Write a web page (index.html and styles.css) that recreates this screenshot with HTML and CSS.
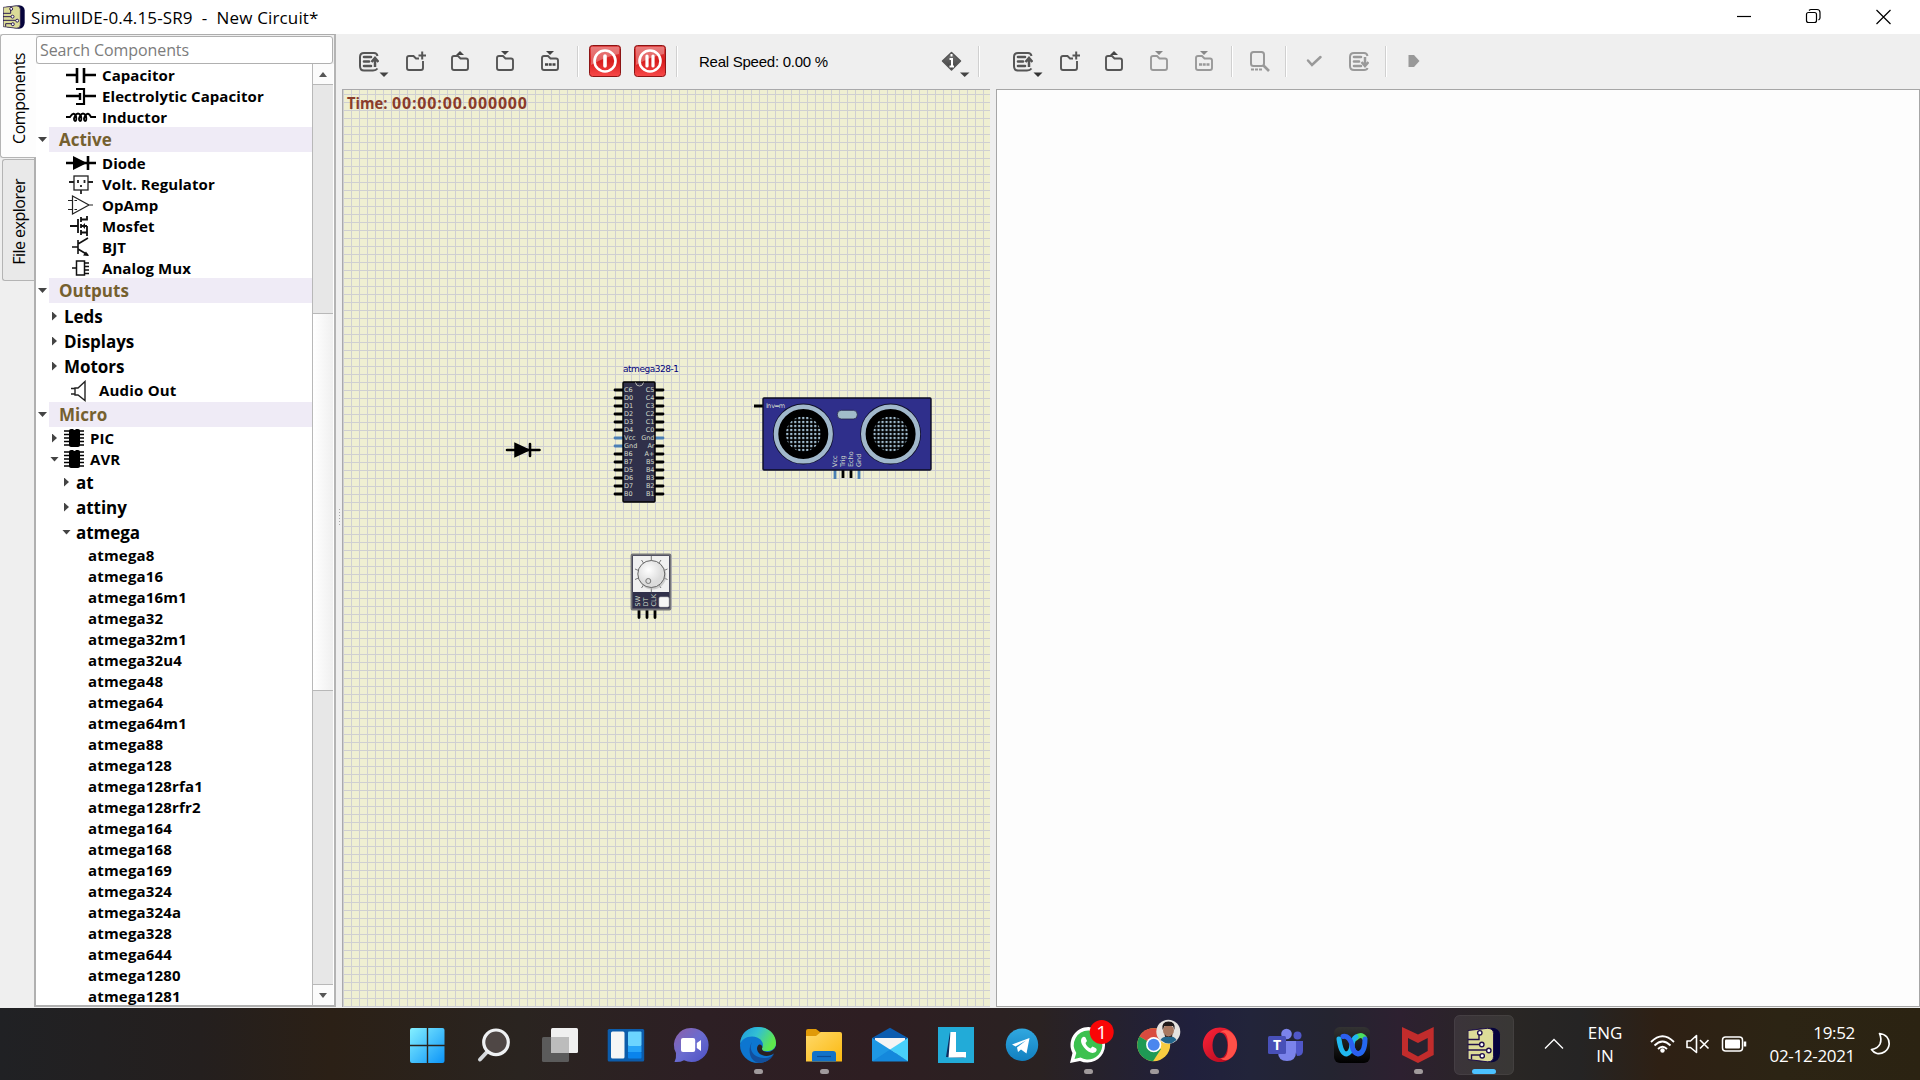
FILE: index.html
```html
<!DOCTYPE html>
<html lang="en">
<head>
<meta charset="utf-8">
<title>SimulIDE-0.4.15-SR9 - New Circuit*</title>
<link rel="stylesheet" href="styles.css">
</head>
<body>
<svg width="0" height="0" class="defs" aria-hidden="true">
  <defs>
    <linearGradient id="gDark" x1="0" y1="0" x2="0" y2="1"><stop offset="0" stop-color="#777"/><stop offset="1" stop-color="#3c3c3c"/></linearGradient>
    <linearGradient id="gRed" x1="0" y1="0" x2="0" y2="1"><stop offset="0" stop-color="#e04848"/><stop offset=".5" stop-color="#d81c1c"/><stop offset="1" stop-color="#f84a4a"/></linearGradient>
    <symbol id="doc-up" viewBox="0 0 20 20">
      <path d="M18.500 4Q18 1 15 1H5Q1 1 1 5V14Q1 18.500 5 18.500H14Q17 18.500 18.500 16.500" fill="none" stroke="currentColor" stroke-width="2"/>
      <path d="M5 5H12M5 9.500H10M5 14H12" stroke="currentColor" stroke-width="2.600" stroke-linecap="round"/>
      <path d="M16 15V7M12.500 10L16 6L19.500 10" fill="none" stroke="currentColor" stroke-width="2.500"/>
    </symbol>
    <symbol id="doc-down" viewBox="0 0 20 20">
      <path d="M18.500 4Q18 1 15 1H5Q1 1 1 5V14Q1 18 5 18H15Q18 18 18.500 16" fill="none" stroke="currentColor" stroke-width="2"/>
      <path d="M5 5H12M5 9.500H10M5 14H12" stroke="currentColor" stroke-width="2.600" stroke-linecap="round"/>
      <path d="M16 5V13M12.500 10L16 14L19.500 10" fill="none" stroke="currentColor" stroke-width="2.500"/>
    </symbol>
    <symbol id="folder" viewBox="0 0 18 16"><path d="M1 3Q1 1 3 1H7L9.500 3.500H15Q17 3.500 17 5.500V13Q17 15 15 15H3Q1 15 1 13Z" fill="none" stroke="currentColor" stroke-width="1.900"/></symbol>
    <symbol id="folder-new" viewBox="0 0 21 20">
      <path d="M10 7.500L7.500 5H3Q1 5 1 7V17Q1 19 3 19H15Q17 19 17 17V10M9.500 7.500H13" fill="none" stroke="currentColor" stroke-width="1.900"/>
      <path d="M12.500 4.500H20M16.200 .500V8.500" stroke="currentColor" stroke-width="2"/>
    </symbol>
    <symbol id="simul" viewBox="0 0 33 35">
      <path d="M5 2L24 0Q32 1 32.500 7V26Q32 34 24 35L6 33Z" fill="#06043c"/>
      <path d="M.500 3L20 .800Q26 1 26 6V29Q26 34.500 20 34.300L.500 32Z" fill="#dcdc98" stroke="#20104c" stroke-width="1"/>
      <path d="M0 12H11.500V5M0 17H14M0 22.500H21M4 32V27.500H14" fill="none" stroke="#20104c" stroke-width="1.400"/>
      <g fill="#fff" stroke="#20104c" stroke-width="1.400"><circle cx="12.300" cy="5.300" r="2.200"/><circle cx="14.300" cy="17" r="2.200"/><circle cx="21.300" cy="23" r="2.200"/><circle cx="14.700" cy="28.300" r="2.200"/></g>
    </symbol>
    <symbol id="dip" viewBox="0 0 20 18"><path d="M0 2H20M0 5.500H20M0 9H20M0 12.500H20M0 16H20" stroke="#000" stroke-width="1.500"/><rect x="5" y="0" width="11" height="18" rx="2"/><path d="M9 0Q10.500 2 12 0" fill="#fff"/></symbol>
  </defs>
</svg>

<div class="app">
  <header class="titlebar">
    <svg class="app-icon" width="22" height="24"><use href="#simul"/></svg>
    <h1 class="title">SimulIDE-0.4.15-SR9 &nbsp;- &nbsp;New Circuit*</h1>
    <svg class="win-controls" width="190" height="34" fill="none" stroke="#000" stroke-width="1.200">
      <path d="M7 16.500H21"/>
      <rect x="76.500" y="12.500" width="10" height="10" rx="2"/><path d="M79 10.500Q80 9.500 81 9.500H87Q90 9.500 90 12.500V18Q90 19 88.500 20"/>
      <path d="M146.500 10L160.500 24M160.500 10L146.500 24"/>
    </svg>
  </header>

  <main class="workspace">
    <nav class="tabs">
      <div class="tab tab-active"><span>Components</span></div>
      <div class="tab"><span>File explorer</span></div>
    </nav>

    <aside class="panel">
      <div class="search">Search Components</div>
      <div class="tree-wrap">
        <div class="tree">
          <div class="row part"><svg width="30" height="20"><path d="M0 10H11M18 10H30M11 3V18M18 3V18" stroke="#000" stroke-width="2.600"/></svg>Capacitor</div>
          <div class="row part"><svg width="30" height="20"><path d="M0 10H14M14 7V14M18 10H30" stroke="#000" stroke-width="2.400"/><path d="M10 3H18V18H10" fill="none" stroke="#000" stroke-width="2.200"/></svg>Electrolytic Capacitor</div>
          <div class="row part"><svg width="30" height="20"><path d="M0 10H4Q8 4 10 9Q11 14 9 14Q7 13 9 9Q12 4 15 9Q16 14 14 14Q12 13 14 9Q17 4 20 9Q21 14 19 14Q17 13 19 9Q22 4 25 10H30" fill="none" stroke="#000" stroke-width="1.800"/></svg>Inductor</div>
          <div class="row cat"><i class="arr down"></i><span>Active</span></div>
          <div class="row part"><svg width="30" height="20"><path d="M0 10H30M22 3V17" stroke="#000" stroke-width="2.600"/><path d="M7 3L21 10L7 17Z"/></svg>Diode</div>
          <div class="row part"><svg width="30" height="20" fill="none" stroke="#222" stroke-width="1.300"><rect x="8" y="2" width="14" height="14"/><path d="M3 8H8M22 8H27M15 16V20M12 6V9M18.500 6V9M15 11V13" stroke-width="1.800"/></svg>Volt. Regulator</div>
          <div class="row part"><svg width="30" height="20" fill="none" stroke="#222" stroke-width="1.200"><path d="M6.500 1V19L23 10ZM2 5.500H6.500M2 14.500H6.500M23 10H27M8.500 5.500H11M8.500 14.500H11"/></svg>OpAmp</div>
          <div class="row part"><svg width="30" height="20" fill="none" stroke="#111" stroke-width="1.800"><path d="M4 10H12M12 3V17M15 1V6M15 8V12M15 14V19M15 3.500H21V0M15 10H21M15 16.500H21M21 10V20"/><path d="M16 10L19 7V13Z" fill="#111" stroke="none"/></svg>Mosfet</div>
          <div class="row part"><svg width="30" height="20" fill="none" stroke="#111" stroke-width="1.600"><path d="M6 10H12M12 3V17M12 7L22 1M12 12L22 18"/><path d="M23 19L17 18.500L20 14.500Z" fill="#111" stroke="none"/></svg>BJT</div>
          <div class="row part"><svg width="30" height="20" fill="none" stroke="#111" stroke-width="1.500"><rect x="10.500" y="3" width="8" height="14"/><path d="M6 10H10M18 5H23M18 8.500H23M18 12H23M18 15.500H23"/></svg>Analog Mux</div>
          <div class="row cat"><i class="arr down"></i><span>Outputs</span></div>
          <div class="row group"><i class="arr right"></i>Leds</div>
          <div class="row group"><i class="arr right"></i>Displays</div>
          <div class="row group"><i class="arr right"></i>Motors</div>
          <div class="row audio"><svg width="30" height="22" fill="none" stroke="#222" stroke-width="1.400"><path d="M9 8H12L19 1.500V20.500L12 15H9ZM5 8.500H9M5 14H9"/></svg>Audio Out</div>
          <div class="row cat"><i class="arr down"></i><span>Micro</span></div>
          <div class="row micro"><i class="arr right"></i><svg width="20" height="18"><use href="#dip"/></svg>PIC</div>
          <div class="row micro"><i class="arr down"></i><svg width="20" height="18"><use href="#dip"/></svg>AVR</div>
          <div class="row group deep"><i class="arr right"></i>at</div>
          <div class="row group deep"><i class="arr right"></i>attiny</div>
          <div class="row group deep"><i class="arr down"></i>atmega</div>
          <div class="row leaf">atmega8</div>
          <div class="row leaf">atmega16</div>
          <div class="row leaf">atmega16m1</div>
          <div class="row leaf">atmega32</div>
          <div class="row leaf">atmega32m1</div>
          <div class="row leaf">atmega32u4</div>
          <div class="row leaf">atmega48</div>
          <div class="row leaf">atmega64</div>
          <div class="row leaf">atmega64m1</div>
          <div class="row leaf">atmega88</div>
          <div class="row leaf">atmega128</div>
          <div class="row leaf">atmega128rfa1</div>
          <div class="row leaf">atmega128rfr2</div>
          <div class="row leaf">atmega164</div>
          <div class="row leaf">atmega168</div>
          <div class="row leaf">atmega169</div>
          <div class="row leaf">atmega324</div>
          <div class="row leaf">atmega324a</div>
          <div class="row leaf">atmega328</div>
          <div class="row leaf">atmega644</div>
          <div class="row leaf">atmega1280</div>
          <div class="row leaf">atmega1281</div>
        </div>
        <div class="scrollbar">
          <div class="sb-btn"><svg width="8" height="5"><path d="M0 5L4 0L8 5Z" fill="#555"/></svg></div>
          <div class="sb-before"></div>
          <div class="sb-thumb"></div>
          <div class="sb-after"></div>
          <div class="sb-btn"><svg width="8" height="5"><path d="M0 0H8L4 5Z" fill="#555"/></svg></div>
        </div>
      </div>
    </aside>

    <div class="splitter"><i></i></div>

    <section class="circuit">
      <div class="toolbar">
        <svg class="tool first" width="50" height="55"><use href="#doc-up" x="16" y="18" width="20" height="20"/><path d="M36.500 38.500H45.500L41 43Z" fill="#444"/></svg>
        <svg class="tool" width="45" height="55"><use href="#folder-new" x="13" y="17" width="21" height="20"/></svg>
        <svg class="tool" width="45" height="55"><use href="#folder" x="13" y="21" width="18" height="16"/><path d="M18 21L22 17L26 21Z" fill="#444"/></svg>
        <svg class="tool" width="45" height="55"><use href="#folder" x="13" y="21" width="18" height="16"/><path d="M18 17H26L22 21Z" fill="#444"/></svg>
        <svg class="tool" width="45" height="55"><use href="#folder" x="13" y="21" width="18" height="16"/><path d="M18 17H26L22 21Z" fill="#444"/><path d="M17 30.500H20M20.700 30.500H23.700M24.500 30.500H27.500" stroke="#444" stroke-width="2.500"/></svg>
        <i class="sep"></i>
        <svg class="tool" width="45" height="55"><rect x="7.500" y="11.500" width="31" height="31" rx="3" fill="url(#gRed)" stroke="#8c1414"/><path d="M9 13H37V20Q25 22 9 31Z" fill="#fff" opacity=".3"/><circle cx="23" cy="27" r="10.500" fill="none" stroke="#fff" stroke-width="2.600"/><path d="M23 22V32" stroke="#fff" stroke-width="3.600" stroke-linecap="round"/></svg>
        <svg class="tool" width="45" height="55"><rect x="7.500" y="11.500" width="31" height="31" rx="3" fill="url(#gRed)" stroke="#8c1414"/><path d="M9 13H37V20Q25 22 9 31Z" fill="#fff" opacity=".3"/><circle cx="23" cy="27" r="10.500" fill="none" stroke="#fff" stroke-width="2.600"/><path d="M20 22V32M26 22V32" stroke="#fff" stroke-width="3.200" stroke-linecap="round"/></svg>
        <i class="sep"></i>
        <span class="speed">Real Speed: 0.00 %</span>
        <svg class="tool info" width="45" height="55"><path d="M16.500 18.500L25.500 27L16.500 36L7.500 27Z" fill="url(#gDark)" stroke="#555" stroke-width="1.500" stroke-linejoin="round"/><path d="M16.500 20V22.500M14.500 25H17V33M14.500 32.500H19" stroke="#fff" stroke-width="2" fill="none"/><path d="M25 38.500H34.500L29.700 43Z" fill="#444"/></svg>
        <i class="sep"></i>
      </div>
      <svg class="canvas" width="648" height="918" viewBox="342 89 648 918">
        <defs>
          <pattern id="grid" x="351" y="94" width="8" height="8" patternUnits="userSpaceOnUse"><path d="M0 0H8V1H1V8H0Z" fill="#cfcfd2"/></pattern>
          <pattern id="mesh" x="-1.100" y="-1.100" width="4" height="4" patternUnits="userSpaceOnUse"><rect width="2.200" height="2.200" fill="#a3bfd2"/></pattern>
          <radialGradient id="knob" cx=".4" cy=".35"><stop offset="0" stop-color="#fff"/><stop offset="1" stop-color="#dcdcdc"/></radialGradient>
        </defs>
        <rect x="342" y="89" width="648" height="918" fill="#efefd2"/>
        <rect x="342" y="89" width="648" height="918" fill="url(#grid)"/>
        <path d="M342 89H990V90H343V1007H342Z" fill="#a9a9ab"/>
        <text x="347" y="109" class="time" textLength="40.500" lengthAdjust="spacingAndGlyphs">Time:</text>
        <text x="392" y="109" class="time" textLength="135">00:00:00.000000</text>

        <g stroke="#000" stroke-width="2.600" stroke-linecap="round"><path d="M507 450H539.500M530 444V456"/><path d="M515 443.500V456.500L529 450Z" stroke-width="1.500"/></g>

        <text x="623" y="371.800" class="chip-name" textLength="56">atmega328-1</text>
        <g stroke="#000" stroke-width="2.800" stroke-linecap="round">
          <path d="M615 390H663M615 398H663M615 406H663M615 414H663M615 422H663M615 430H663M640 446H663M615 454H663M615 462H663M615 470H663M615 478H663M615 486H663M615 494H663"/>
          <path d="M615 438H663M615 446H630" stroke="#4a7fb5"/>
        </g>
        <rect x="623" y="382" width="32" height="120" rx="1" fill="#30304a" stroke="#000" stroke-width="1.400"/>
        <path d="M635.500 382.500Q636 386 639.500 386Q643 386 643.500 382.500" fill="none" stroke="#b8b8b0" stroke-width="1"/>
        <g class="pins">
          <text x="624" y="392.300">C6</text><text x="624" y="400.300">D0</text><text x="624" y="408.300">D1</text><text x="624" y="416.300">D2</text><text x="624" y="424.300">D3</text><text x="624" y="432.300">D4</text><text x="624" y="440.300">Vcc</text><text x="624" y="448.300">Gnd</text><text x="624" y="456.300">B6</text><text x="624" y="464.300">B7</text><text x="624" y="472.300">D5</text><text x="624" y="480.300">D6</text><text x="624" y="488.300">D7</text><text x="624" y="496.300">B0</text>
        </g>
        <g class="pins pins-r">
          <text x="654.500" y="392.300">C5</text><text x="654.500" y="400.300">C4</text><text x="654.500" y="408.300">C3</text><text x="654.500" y="416.300">C2</text><text x="654.500" y="424.300">C1</text><text x="654.500" y="432.300">C0</text><text x="654.500" y="440.300">Gnd</text><text x="654.500" y="448.300">Ar</text><text x="654.500" y="456.300">A+</text><text x="654.500" y="464.300">B5</text><text x="654.500" y="472.300">B4</text><text x="654.500" y="480.300">B3</text><text x="654.500" y="488.300">B2</text><text x="654.500" y="496.300">B1</text>
        </g>

        <path d="M639 610V617.500M647 610V617.500M655 610V617.500" stroke="#000" stroke-width="2.800" stroke-linecap="round"/>
        <rect x="631.500" y="554.500" width="39" height="55" rx="1" fill="#30304a" stroke="#77777a" stroke-width="1.800"/>
        <rect x="633" y="556" width="36" height="36" fill="#f0f0f0"/>
        <path d="M651.300 556V592M641.500 560L643.500 563M661 560L659 563M635 569L638.500 570.500M667.500 569L664 570.500M635 579.500L638.500 578M667.500 579.500L664 578M641.500 588L643.500 585M661 588L659 585" stroke="#777" stroke-width="1"/>
        <circle cx="652.300" cy="575.500" r="14" fill="#b8b8b8" opacity=".6"/>
        <circle cx="651.300" cy="574" r="13.500" fill="url(#knob)" stroke="#666" stroke-width="1"/>
        <circle cx="648.300" cy="581" r="2.500" fill="#ddd" stroke="#777" stroke-width="1"/>
        <rect x="659" y="597" width="10" height="10" rx="1.500" fill="#f6f6f6" stroke="#bbb" stroke-width=".6"/>
        <g class="pins wide"><text transform="translate(640.300 606.500) rotate(-90)">SW</text><text transform="translate(648.300 606.500) rotate(-90)">DT</text><text transform="translate(656.300 606.500) rotate(-90)">CLK</text></g>

        <path d="M754 406H764M843 470V478M851 470V478" stroke="#000" stroke-width="2.800"/>
        <path d="M835 470V479M859 470V479" stroke="#4a7fb5" stroke-width="2.800"/>
        <rect x="763" y="398" width="168" height="72" rx="1" fill="#2f2f8b" stroke="#0c0c20" stroke-width="1.400"/>
        <g id="transducer" transform="translate(803.300 434)"><circle r="27.400" fill="#000" stroke="#10102a" stroke-width="6"/><circle r="27.300" fill="#000" stroke="#a1b8cb" stroke-width="4.600"/><circle r="17.500" fill="url(#mesh)"/></g>
        <use href="#transducer" x="87.300"/>
        <rect x="837.300" y="410.300" width="20" height="8.700" rx="4" fill="#a1bdc9" stroke="#24244a" stroke-width=".8"/>
        <g class="pins"><text x="766" y="408" textLength="19">In v=m</text><text transform="translate(836.500 467) rotate(-90)">Vcc</text><text transform="translate(844.500 467) rotate(-90)">Trig</text><text transform="translate(852.500 467) rotate(-90)">Echo</text><text transform="translate(860.500 467) rotate(-90)">Gnd</text></g>
      </svg>
    </section>

    <section class="editor">
      <div class="toolbar">
        <svg class="tool first" width="50" height="55"><use href="#doc-up" x="14" y="18" width="20" height="20"/><path d="M34.500 38.500H43.500L39 43Z" fill="#333"/></svg>
        <svg class="tool" width="45" height="55"><use href="#folder-new" x="13" y="17" width="21" height="20"/></svg>
        <svg class="tool" width="45" height="55"><use href="#folder" x="13" y="21" width="18" height="16"/><path d="M18 21L22 17L26 21Z" fill="#444"/></svg>
        <svg class="tool off" width="45" height="55"><use href="#folder" x="13" y="21" width="18" height="16"/><path d="M18 17H26L22 21Z" fill="#888"/></svg>
        <svg class="tool off" width="45" height="55"><use href="#folder" x="13" y="21" width="18" height="16"/><path d="M18 17H26L22 21Z" fill="#888"/><path d="M17 30.500H20M20.700 30.500H23.700M24.500 30.500H27.500" stroke="#999" stroke-width="2.500"/></svg>
        <i class="sep"></i>
        <svg class="tool off" width="45" height="55" fill="none" stroke="#999"><rect x="15" y="18" width="13" height="14" rx="2.500" stroke-width="2"/><path d="M27 31L33 37" stroke-width="2.600"/><path d="M15 35.500H18M19 35.500H22M23 35.500H26" stroke-width="2.200"/></svg>
        <i class="sep wider"></i>
        <svg class="tool off" width="45" height="55"><path d="M17 26.500L21 31L29.500 23" fill="none" stroke="#999" stroke-width="2.500" stroke-linecap="round"/></svg>
        <svg class="tool off" width="45" height="55"><use href="#doc-down" x="13" y="18" width="20" height="20"/></svg>
        <i class="sep wider"></i>
        <svg class="tool off" width="45" height="55"><path d="M17.500 21H23L28.500 27L23 33H17.500Z" fill="#999"/></svg>
      </div>
      <div class="page"></div>
    </section>
  </main>

  <footer class="taskbar">
    <div class="apps">
      <svg viewBox="0 0 66 72"><linearGradient id="w" x2="1" y2="1"><stop offset="0" stop-color="#84f0ff"/><stop offset="1" stop-color="#0c94f8"/></linearGradient><path d="M18 20H32.800V36.800H16V22Q16 20 18 20ZM34.200 20H48.500Q50.500 20 50.500 22V36.800H34.200ZM16 38.200H32.800V55H18Q16 55 16 53ZM34.200 38.200H50.500V53Q50.500 55 48.500 55H34.200Z" fill="url(#w)"/></svg>
      <svg viewBox="0 0 66 72"><path d="M27 44L20 51.500" stroke="#d5d8dc" stroke-width="4" stroke-linecap="round"/><circle cx="36" cy="34.300" r="12.300" fill="#4f4745" stroke="#eff1f3" stroke-width="3.200"/></svg>
      <svg viewBox="0 0 66 72"><rect x="25" y="20" width="27" height="25" rx="1.500" fill="#f0f0f0"/><rect x="16" y="29" width="27" height="25" rx="1.500" fill="#5b5b5b"/><path d="M25 29H43V45H25Z" fill="#bcbcbc"/></svg>
      <svg viewBox="0 0 66 72"><rect x="15.700" y="21" width="36.500" height="32.500" rx="1.500" fill="#0c5cab"/><rect x="19" y="23.500" width="13.500" height="27" rx="1.500" fill="#f6f6f6"/><rect x="36" y="23.500" width="13.500" height="14.500" rx="1" fill="#6cd4ff"/><rect x="36" y="38" width="13.500" height="6" fill="#27a4f8"/><rect x="36" y="44" width="13.500" height="6.500" rx="1" fill="#0a84ec"/></svg>
      <svg viewBox="0 0 66 72"><linearGradient id="ch" x2="1" y2="1"><stop offset="0" stop-color="#8e60a8"/><stop offset=".5" stop-color="#6a6cd0"/><stop offset="1" stop-color="#4c50c4"/></linearGradient><path d="M33.700 20A17 17 0 1 1 26 52.200Q22 54.500 16.500 54Q18.500 50 18 45A17 17 0 0 1 33.700 20Z" fill="url(#ch)"/><rect x="23" y="30" width="14.200" height="14" rx="2" fill="#fff"/><path d="M38.800 35L43 32V43L38.800 40Z" fill="#fff"/></svg>
      <svg viewBox="0 0 66 72"><linearGradient id="e1" x2="1" y2=".4"><stop offset="0" stop-color="#1d98dc"/><stop offset=".5" stop-color="#32bfd4"/><stop offset="1" stop-color="#5ee84c"/></linearGradient><circle cx="34" cy="37" r="18" fill="#0d76d0"/><path d="M16 36C17 24 25 19 34 19C45 19 52 27 52 35C52 41 47 43.500 42 43C38 43 37 41 38.500 39C40 36 38 29 28 28.500C22 28.500 17.500 32 16 36Z" fill="url(#e1)"/><path d="M28 34C24 42 30 51 42 50C46 49.500 48 48 50 46C47 52 41 55 35 55C26 54 23 42 28 34Z" fill="#124f9c"/><path d="M38.500 39C37 42 39 43.800 43 44C47 44 50 42 52 38L54 45L50 45.500C44 50 34 48 33 41C33 36 37 35 38.500 39Z" fill="#2a2022"/><path class="run" d="M32.500 63.500H36.500"/></svg>
      <svg viewBox="0 0 66 72"><linearGradient id="fo" x2="1" y2="1"><stop offset="0" stop-color="#ffd96a"/><stop offset="1" stop-color="#fbb910"/></linearGradient><path d="M16 23Q16 21 18 21H26L30 24H50V30H16Z" fill="#e09a08"/><path d="M16 28H26L31 24H50Q52 24 52 26V53.500H16Z" fill="url(#fo)"/><path d="M22 53.500V46Q22 43 25 43H43Q46 43 46 46V53.500Z" fill="#1272c8"/><path d="M27 48.500H41" stroke="#0c4c94" stroke-width="1.200"/><path class="run" d="M32.500 63.500H36.500"/></svg>
      <svg viewBox="0 0 66 72"><path d="M16 30L34 19.700L52 30V36H16Z" fill="#0b5cb0"/><path d="M19 30H49V40L34 48L19 40Z" fill="#f4f4f4"/><path d="M16 30L52 53H16Z" fill="#1e98e4"/><path d="M52 30V53.500L34 41.500Z" fill="#48d0fa"/><path d="M16 53.500L34 41.500L52 53.500Z" fill="#1488dc"/></svg>
      <svg viewBox="0 0 66 72"><rect x="16" y="19" width="36" height="36" fill="#22abd8"/><path d="M28 24L24 49L43 50L30 43Z" fill="#0c2c60"/><path d="M28.500 24H34V44H44V49.500H26.500Z" fill="#fff"/></svg>
      <svg viewBox="0 0 66 72"><linearGradient id="te" x2="0" y2="1"><stop offset="0" stop-color="#30a8e0"/><stop offset="1" stop-color="#1280c0"/></linearGradient><circle cx="34" cy="36.700" r="16.200" fill="url(#te)"/><path d="M24 36.500L41.500 30L38.500 45.500L33 41.500L30 44L29 39.500L38 32.500L27.500 38.500Z" fill="#fff"/></svg>
      <svg viewBox="0 0 66 72"><path d="M34.500 19A17.800 17.800 0 1 1 26 53L16 55L18.500 45A17.800 17.800 0 0 1 34.500 19Z" fill="#fff"/><path d="M34.500 22.500A14.500 14.500 0 1 1 26.500 49.500L20.500 51L22.300 45A14.500 14.500 0 0 1 34.500 22.500Z" fill="#3cc14f"/><path d="M29 29C26 31 26.500 35 30 39.500C34 44.500 39 46.500 42 43.500C43 42 43 41 41.500 40L38.500 38.500L36.500 40.500Q32.500 38.500 31.500 35L33 33L31.500 29.500Q30.500 28.500 29 29Z" fill="#fff"/><circle cx="47.700" cy="24" r="12" fill="#f90606"/><text x="47.700" y="30.500" class="badge">1</text><path class="run" d="M32.500 63.500H36.500"/></svg>
      <svg viewBox="0 0 66 72"><circle cx="33.700" cy="36.700" r="16.500" fill="#f8cc40"/><path d="M33.700 36.700L48 28.500A16.500 16.500 0 0 0 19.400 28.500Z" fill="#d94b3f"/><path d="M19.400 28.500A16.500 16.500 0 0 0 33 53.200L41 41L33.700 36.700Z" fill="#1e9a55"/><circle cx="33.700" cy="36.700" r="7.600" fill="#fff"/><circle cx="33.700" cy="36.700" r="6" fill="#4a86ee"/><circle cx="48.300" cy="23.700" r="12" fill="#e6e3e0"/><path d="M40.500 32Q43 28 48 29Q54 27 56.500 32Q49 39 40.500 32Z" fill="#24668c"/><circle cx="48.500" cy="22.500" r="5.500" fill="#a87860"/><path d="M42.500 22Q41 13.500 48.500 13.500Q56 13.500 54.500 22L53 18H44.500Z" fill="#201a1a"/><path d="M44.500 26Q48.500 30.500 52.500 26L52 29H45Z" fill="#40302c"/><path class="run" d="M32.500 63.500H36.500"/></svg>
      <svg viewBox="0 0 66 72"><linearGradient id="op" x2="1" y2="1"><stop offset="0" stop-color="#ff2438"/><stop offset="1" stop-color="#a8061c"/></linearGradient><path fill-rule="evenodd" d="M34 19.500A17.200 17.300 0 1 0 34.010 19.500ZM34 24.500A7.500 12.800 0 1 1 33.990 24.500Z" fill="url(#op)"/><path d="M34 24.500Q42 22 42 37Q42 52 34 50Q40 55 46.500 48.500Q51 43 51 37Q51 30 46 25Q40 19.500 34 24.500Z" fill="#ff5048"/></svg>
      <svg viewBox="0 0 66 72"><circle cx="45.500" cy="27.500" r="4" fill="#5057c8"/><path d="M40 33H51V43Q51 48 45 48Z" fill="#5057c8"/><circle cx="34.500" cy="26" r="5.300" fill="#7b83eb"/><path d="M26 33H44V44Q44 53 35 53Q26 53 26 44Z" fill="#7b83eb"/><rect x="16" y="28" width="18" height="18" rx="1.500" fill="#4850b8"/><text x="25" y="42" class="teams">T</text></svg>
      <svg viewBox="0 0 66 72"><linearGradient id="wb" x2="0" y2="1"><stop offset="0" stop-color="#333"/><stop offset="1" stop-color="#000"/></linearGradient><rect x="16" y="19" width="36" height="36" rx="6" fill="url(#wb)"/><g fill="none" stroke-width="5" stroke-linecap="round"><path d="M38 30Q43 25 46.500 30" stroke="#4ce060"/><path d="M47 31Q47 45 40 46Q35 45 34 38" stroke="#2468f0"/><path d="M21 31Q23 46 28.500 46Q33 45 34 37Q35 31 38 29" stroke="#20b8f0"/><path d="M25 28.500Q31 27 34 37Q35 45 40 45.500" stroke="#2c60f0"/></g></svg>
      <svg viewBox="0 0 66 72"><path d="M18 19L34 26.500L49.700 19V47L34 55L18 47Z" fill="#c22c2c"/><path d="M24 30L34 35L43.700 30V43L34 48.500L24 43Z" fill="#282330"/><path class="run" d="M32.500 63.500H36.500"/></svg>
      <svg viewBox="0 0 66 72"><rect x="4.500" y="7.500" width="59" height="59" rx="5" fill="#fff" fill-opacity=".08" stroke="#fff" stroke-opacity=".09"/><use href="#simul" x="17.500" y="19.500" width="33" height="35"/><path d="M24.500 63.500H43.500" stroke="#4cc2ff" stroke-width="5" stroke-linecap="round"/></svg>
    </div>
    <div class="tray">
      <svg width="20" height="12" fill="none" stroke="#fff" stroke-width="1.300"><path d="M1 10.500L10 1.500L19 10.500"/></svg>
      <div class="lang">ENG<br>IN</div>
      <svg class="status" width="98" height="20" fill="none" stroke="#fff">
        <g stroke-width="1.800"><path d="M1 8Q12.500 -3.500 24 8M4.500 11.500Q12.500 3.500 20.500 11.500M8 15Q12.500 10.500 17 15"/></g><circle cx="12.500" cy="16.500" r="2.200" fill="#fff" stroke="none"/>
        <path d="M37 7H40.500L46.500 1.500V18.500L40.500 13.500H37Z" stroke-width="1.600" stroke-linejoin="round"/><path d="M50 6L58.500 14.500M58.500 6L50 14.500" stroke-width="1.600"/>
        <rect x="72.500" y="3" width="20" height="14" rx="3" stroke-width="1.500"/><rect x="75" y="5.500" width="15" height="9" rx="1" fill="#fff" stroke="none"/><path d="M95 7.500V12.500" stroke-width="2.500"/>
      </svg>
      <div class="clock">19:52<br>02-12-2021</div>
      <svg width="22" height="24" fill="none" stroke="#fff" stroke-width="1.700"><path d="M9.500 1.500C16 2 19.500 7 19.200 12C18.500 19 12 22.500 7 21.500Q3.500 20.500 1.500 17.500Q8 16.500 10 12Q12 7 9.500 1.500Z" stroke-linejoin="round"/></svg>
    </div>
  </footer>
</div>
</body>
</html>
```

FILE: styles.css
```css
* { box-sizing: border-box; }
body { margin: 0; font-family: "Open Sans", "Noto Sans", sans-serif; color: #000; background: #efefef; overflow: hidden; }
svg { display: block; flex: none; }
.defs { position: absolute; }
.app { width: 1920px; height: 1080px; display: flex; flex-direction: column; }

.titlebar { height: 34px; flex: none; background: #fff; display: flex; align-items: center; padding: 0 0 0 3px; }
.title { margin: 0 auto 0 6px; font-size: 17px; font-weight: 400; line-height: 34px; padding-top: 1px; letter-spacing: .15px; white-space: nowrap; }

.workspace { flex: 1; min-height: 0; display: flex; }
.tabs { width: 34px; display: flex; flex-direction: column; }
.tab { height: 122px; margin: 1px 0 0 2px; border: 1px solid #b4b4b4; border-right: 0; border-radius: 3px 0 0 3px; background: #e9e9e9; display: flex; align-items: center; justify-content: center; padding: 4px 0 0 1px; }
.tab-active { height: 124px; margin: 0 -2px 0 0; background: #fdfdfd; position: relative; }
.tab span { writing-mode: vertical-rl; transform: rotate(180deg); font-size: 16px; line-height: 22px; letter-spacing: -.5px; white-space: nowrap; }

.panel { width: 302px; height: 973px; border: 1px solid #adadad; border-right: 2px solid #b4b4b4; border-left: 2px solid #b0b0b0; border-bottom: 2px solid #b0b0b0; display: flex; flex-direction: column; background: #efefef; }
.search { height: 28px; margin: 1px 1px 0 0; border: 1px solid #b0b0b0; border-radius: 3px; background: #fff; color: #7c7c7c; font-size: 16px; line-height: 26px; padding-left: 3px; letter-spacing: -.1px; }
.tree-wrap { flex: 1; min-height: 0; display: flex; background: #fff; }
.tree { width: 276px; padding-left: 1px; overflow: hidden; font-weight: 700; }
.row { display: flex; align-items: center; white-space: nowrap; height: 21px; font-size: 15px; letter-spacing: .08px; line-height: 21px; }
.part { padding: 1px 0 0 29px; }
.part svg { margin-right: 6px; }
.cat { height: 25px; font-size: 17px; color: #75602f; line-height: 26px; letter-spacing: 0; }
.cat span { flex: 1; height: 25px; margin-left: 1px; padding-left: 10px; background: #efebf6; }
.arr { width: 11px; display: flex; justify-content: center; }
.arr::before { content: ""; background: #444; }
.down::before { width: 9px; height: 5px; clip-path: polygon(0 0, 100% 0, 50% 100%); }
.right::before { width: 5px; height: 9px; clip-path: polygon(0 0, 100% 50%, 0 100%); }
.group { height: 25px; font-size: 17px; padding: 1px 0 0 12px; letter-spacing: -.05px; }
.group .arr, .micro .arr { margin-right: 4px; }
.deep { padding-left: 24px; }
.audio { height: 24px; padding: 1px 0 0 29px; letter-spacing: .2px; }
.audio svg { margin-right: 3px; }
.micro { padding: 1px 0 0 12px; }
.micro svg { margin: 0 6px 0 0; }
.leaf { padding: 1px 0 0 51px; letter-spacing: .18px; }

.scrollbar { width: 21px; border-left: 1px solid #b8b8b8; display: flex; flex-direction: column; background: #e7e7e7; }
.sb-btn { height: 21px; flex: none; background: #fbfbfb; border-bottom: 1px solid #b8b8b8; display: flex; align-items: center; justify-content: center; }
.sb-btn:last-child { border-top: 1px solid #b8b8b8; border-bottom: 0; }
.sb-before { height: 228px; }
.sb-thumb { height: 378px; background: linear-gradient(90deg, #fff, #f0f0f0); border: solid #b8b8b8; border-width: 1px 0; }
.sb-after { flex: 1; }

.splitter { width: 6px; display: flex; align-items: center; justify-content: center; padding-bottom: 8px; }
.splitter i { width: 1px; height: 17px; margin-left: 1px; background: repeating-linear-gradient(#aaa 0 1px, transparent 1px 3px); }

.circuit { width: 648px; display: flex; flex-direction: column; }
.toolbar { height: 55px; flex: none; display: flex; background: #efefef; }
.tool { color: #555; }
.off { color: #999; }
.sep { width: 9px; height: 31px; margin-top: 12px; flex: none; background: linear-gradient(#d0d0d0, #d0d0d0) 4px 0 / 1px 100% no-repeat, linear-gradient(#fff, #fff) 5px 0 / 1px 100% no-repeat; }
.wider { width: 10px; }
.circuit .first { margin-left: 1px; }
.speed { font: 15px/56px "Liberation Sans", Arial, sans-serif; margin-left: 18px; white-space: nowrap; letter-spacing: -.25px; }
.info { margin-left: auto; margin-right: -6px; }
.circuit .info + .sep { margin-right: 7px; }

.time { font: 700 16px "Open Sans", sans-serif; fill: #8a3c2a; }
.chip-name { font: 9px "DejaVu Sans", sans-serif; fill: #00007c; }
.pins { font: 6.500px "DejaVu Sans", sans-serif; fill: #d2dccb; }
.pins-r { text-anchor: end; }

.editor { flex: 1; margin-left: 6px; display: flex; flex-direction: column; }
.editor .first { margin: 0 -2px 0 3px; }
.page { height: 918px; background: #fdfdfd; border: 1px solid #a6a6a6; }

.taskbar { height: 72px; flex: none; display: flex; padding-left: 394px; background: linear-gradient(90deg, #202124 0, #241f1e 200px, #2b2016 330px, #2a2420 520px, #2d1f24 700px, #2e1e22 880px, #2a2222 1040px, #20203c 1190px, #22243a 1250px, #242430 1330px, #2d2030 1400px, #292624 1510px, #252424 1580px, #2e2014 1660px, #2c2414 1780px, #2b2312 1920px); }
.apps { display: flex; }
.apps svg { width: 66px; height: 72px; }
.run { stroke: #a09a9c; stroke-width: 5; stroke-linecap: round; }
.badge { font: 19px "Open Sans", sans-serif; fill: #fff; text-anchor: middle; }
.teams { font: 700 14px "Open Sans", sans-serif; fill: #fff; text-anchor: middle; }
.tray { flex: 1; display: flex; align-items: center; color: #fff; font-size: 17px; line-height: 23px; padding-left: 28px; }
.lang { width: 60px; margin-left: 11px; text-align: center; }
.status { margin-left: 15px; }
.clock { width: 107px; text-align: right; letter-spacing: -.33px; }
.tray > svg:last-child { margin-left: 15px; }
```
